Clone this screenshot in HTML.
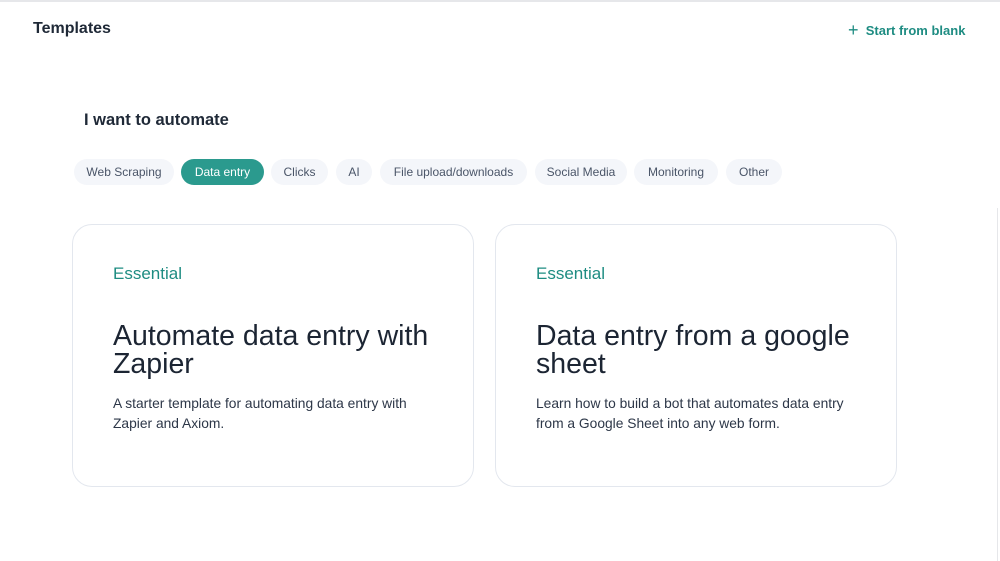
<!DOCTYPE html>
<html><head><style>
*{margin:0;padding:0;box-sizing:border-box}
body{width:1000px;height:561px;background:#fff;font-family:"Liberation Sans",sans-serif;position:relative;overflow:hidden;color:#1c2533}
.a{position:absolute;white-space:nowrap}
.chip{position:absolute;top:159px;height:26px;border-radius:13px;background:#f4f6fa;color:#4a5568;font-size:12px;line-height:26px;text-align:center}
.chip.on{background:#2b9a8e;color:#fff}
.card{position:absolute;top:224px;width:402px;height:263px;border:1px solid #e3e7ee;border-radius:20px}
.ess{position:absolute;left:40px;top:39px;font-size:17px;color:#1e8c82}
.tt{position:absolute;left:40px;top:97px;font-size:28.5px;line-height:28px;color:#1c2533;width:350px}
.ds{position:absolute;left:40px;top:169px;font-size:13.8px;line-height:19.5px;color:#2d3748;width:310px}
</style></head><body>
<div class="a" style="left:0;top:0;width:1000px;height:2px;background:#e6e7ea"></div>
<div class="a" style="left:33px;top:20px;font-size:16px;font-weight:bold;color:#1f2937">Templates</div>
<div class="a" style="left:848px;top:19px;font-size:13px;font-weight:bold;color:#1e8c82"><span style="font-size:18px;font-weight:normal;position:relative;top:1px">+</span>&nbsp; Start from blank</div>
<div class="a" style="left:84px;top:111px;font-size:16.5px;font-weight:bold;color:#1f2937">I want to automate</div>
<div class="chip" style="left:74px;width:100px">Web Scraping</div>
<div class="chip on" style="left:181px;width:83px">Data entry</div>
<div class="chip" style="left:271px;width:57px">Clicks</div>
<div class="chip" style="left:336px;width:36px">AI</div>
<div class="chip" style="left:380px;width:147px">File upload/downloads</div>
<div class="chip" style="left:535px;width:92px">Social Media</div>
<div class="chip" style="left:634px;width:84px">Monitoring</div>
<div class="chip" style="left:726px;width:56px">Other</div>
<div class="card" style="left:72px"><div class="ess">Essential</div><div class="tt">Automate data entry with Zapier</div><div class="ds">A starter template for automating data entry with Zapier and Axiom.</div></div>
<div class="card" style="left:495px"><div class="ess">Essential</div><div class="tt">Data entry from a google sheet</div><div class="ds">Learn how to build a bot that automates data entry from a Google Sheet into any web form.</div></div>
<div class="a" style="left:997px;top:208px;width:1px;height:353px;background:#e6e7ea"></div>
</body></html>
